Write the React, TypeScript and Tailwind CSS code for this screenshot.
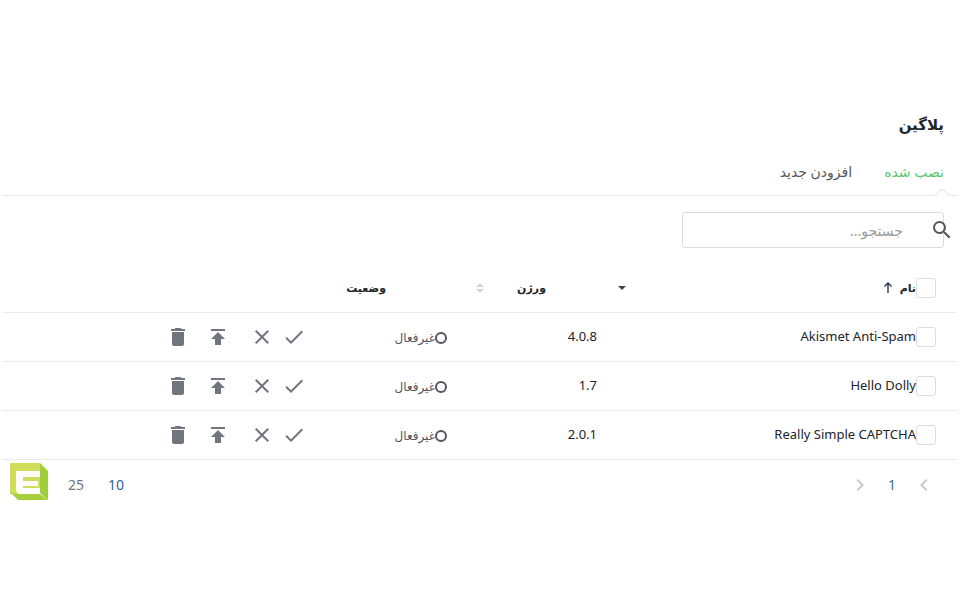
import { useState } from "react";
import { MdCheck, MdChevronLeft, MdChevronRight, MdClose, MdDelete, MdPublish, MdSearch } from "react-icons/md";

const plugins = [
    { name: "Akismet Anti-Spam", version: "4.0.8" },
    { name: "Hello Dolly", version: "1.7" },
    { name: "Really Simple CAPTCHA", version: "2.0.1" },
];

function Checkbox({ label }: { label: string }) {
    return (
        <input
            type="checkbox"
            aria-label={label}
            className="block size-5 shrink-0 appearance-none rounded-[3px] border border-[#dcdce6] bg-white checked:bg-[#61bd6d]"
        />
    );
}

function Logo() {
    return (
        <svg viewBox="0 0 38 37" className="h-[37px] w-[38px]" aria-hidden="true">
            <path d="M0 0H30V31H0Z" fill="#d0dd5b" />
            <path d="M30 0L38 8V37L30 30Z" fill="#a0cd3c" />
            <path d="M0 29L6 31H30L38 37H8Z" fill="#a6ce39" />
            <path d="M6 8H30V14H13V18H28V23H13V25H30V31H9L6 28Z" fill="#fff" />
        </svg>
    );
}

function PluginRow({ name, version }: { name: string; version: string }) {
    return (
        <tr className="h-[49px] border-b border-[#ebebf0]">
            <td className="pr-[21px]">
                <div className="flex items-center">
                    <Checkbox label={name} />
                    <span dir="ltr">{name}</span>
                </div>
            </td>
            <td className="pr-10">{version}</td>
            <td className="pt-0.5 pr-12">
                <div className="flex items-center text-xs text-[#54565b]">
                    <span className="size-3 rounded-full border-2 border-[#54565b]" />
                    غیرفعال
                </div>
            </td>
            <td className="pr-3">
                <div className="flex items-center text-[#70757e]">
                    <button aria-label="فعال کردن" className="ml-2"><MdCheck size={24} /></button>
                    <button aria-label="غیرفعال کردن" className="ml-5"><MdClose size={24} /></button>
                    <button aria-label="بروزرسانی" className="ml-4"><MdPublish size={24} /></button>
                    <button aria-label="حذف"><MdDelete size={24} /></button>
                </div>
            </td>
        </tr>
    );
}

export default function App() {
    const [search, setSearch] = useState("");

    return (
        <main dir="rtl" className="min-h-screen bg-white pt-28 pr-[3px] pl-[2px] font-['Noto_Sans','DejaVu_Sans',sans-serif] text-[13px] text-[#212529]">
            <h1 className="pr-[13px] text-[15px] leading-6 font-bold">پلاگین</h1>

            <nav className="relative mt-5 flex h-10 gap-8 border-b border-[#e8e8f0] pt-1 pr-[13px] text-sm leading-6">
                <a href="#installed" className="text-[#5ec66f]">نصب شده</a>
                <a href="#new" className="text-[#54565b]">افزودن جدید</a>
                <svg viewBox="0 0 14 8" className="absolute right-2 -bottom-px h-2 w-3.5" aria-hidden="true">
                    <path d="M0 8L7 1L14 8Z" fill="#fff" />
                    <path d="M0 7.5L7 1L14 7.5" fill="none" stroke="#dcdce6" />
                </svg>
            </nav>

            <div className="relative mt-4 mr-[13px] h-9 w-[262px]">
                <input
                    type="search"
                    aria-label="جستجو"
                    placeholder="جستجو..."
                    value={search}
                    onChange={(e) => setSearch(e.target.value)}
                    className="h-9 w-full rounded-[3px] border border-[#dcdce6] pr-10 pl-3 text-sm placeholder:text-[#999]"
                />
                <MdSearch size={24} className="absolute top-[6px] -right-2.5 text-[#54565b]" />
            </div>

            <table className="mt-4 w-full table-fixed border-collapse text-right">
                <thead>
                    <tr className="h-12 border-b border-[#ebebf0]">
                        <th className="w-80 pr-[21px]">
                            <div className="flex items-center text-[11px]">
                                <Checkbox label="انتخاب همه" />
                                <span>نام</span>
                                <svg viewBox="0 0 8 11" className="mr-2 h-[11px] w-2 fill-none stroke-[#212f4a]" strokeWidth="1.3" aria-hidden="true">
                                    <path d="M4 11V1M0.5 4.5L4 1L7.5 4.5" />
                                </svg>
                            </div>
                        </th>
                        <th className="w-[142px] pr-[11px]">
                            <div className="flex items-center gap-[72px] text-[11px]">
                                <svg viewBox="0 0 8 4" className="h-1 w-2 fill-[#444]" aria-hidden="true">
                                    <path d="M0 0H8L4 4Z" />
                                </svg>
                                <span>ورژن</span>
                            </div>
                        </th>
                        <th className="w-[177px] pr-[11px]">
                            <div className="flex items-center gap-[90px] text-[11px]">
                                <svg viewBox="0 0 8 10" className="h-2.5 w-2 fill-[#d5d5d8]" aria-hidden="true">
                                    <path d="M0 4L4 0L8 4ZM0 6H8L4 10Z" />
                                </svg>
                                <span>وضعیت</span>
                            </div>
                        </th>
                        <th aria-label="عملیات" />
                    </tr>
                </thead>
                <tbody>
                    {plugins.map((plugin) => (
                        <PluginRow key={plugin.name} {...plugin} />
                    ))}
                </tbody>
            </table>

            <footer className="flex items-center justify-between pt-[3px] pr-[21px] pl-2 text-sm">
                <div className="flex items-center gap-4 pt-2 text-[#c8c8cc]">
                    <button aria-label="قبلی"><MdChevronLeft size={24} /></button>
                    <button className="text-[#3a6ea5]">1</button>
                    <button aria-label="بعدی"><MdChevronRight size={24} /></button>
                </div>
                <div className="flex items-center gap-5">
                    <div className="flex gap-6 pt-2">
                        <button className="text-[#2c5fa8]">10</button>
                        <button className="text-[#70757e]">25</button>
                    </div>
                    <Logo />
                </div>
            </footer>
        </main>
    );
}
